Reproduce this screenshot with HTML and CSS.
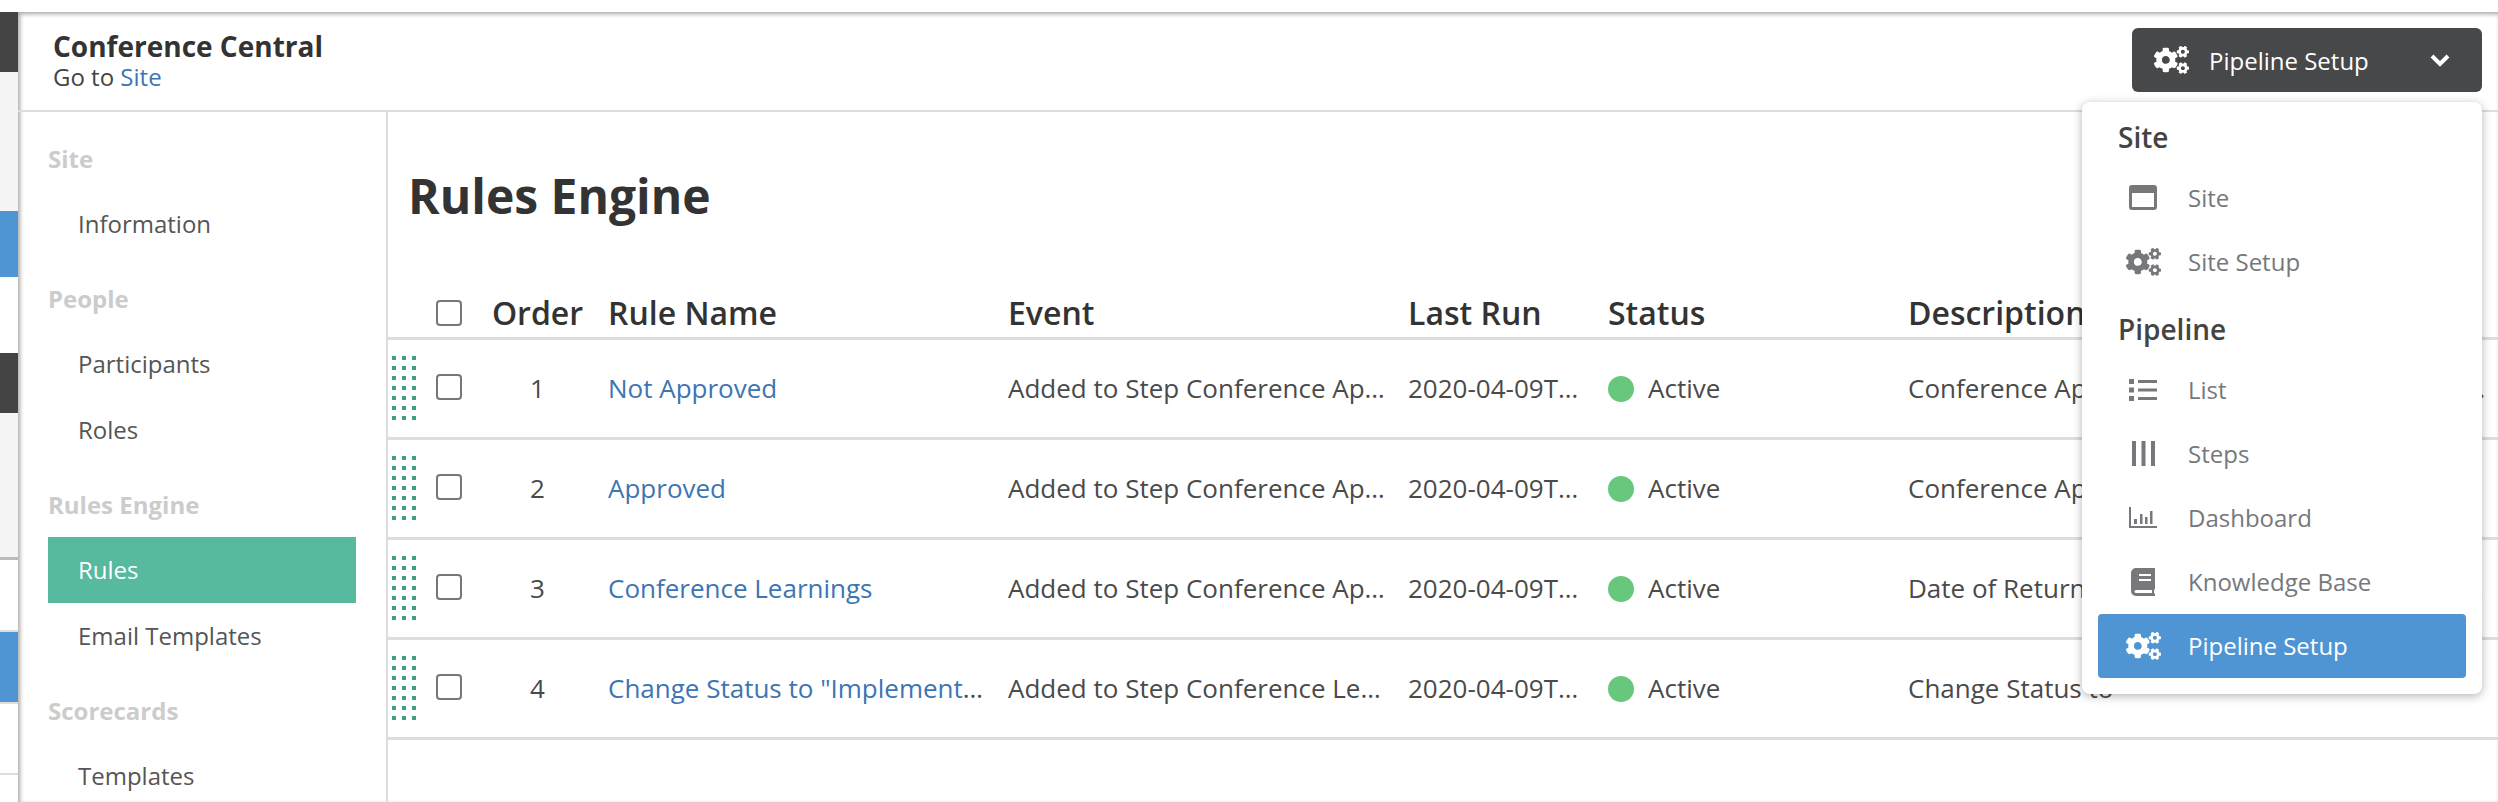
FILE: index.html
```html
<!DOCTYPE html>
<html lang="en">
<head>
<meta charset="utf-8">
<title>Rules Engine</title>
<link rel="stylesheet" href="styles.css">
</head>
<body>
<svg class="defs" aria-hidden="true">
  <symbol id="cogs" viewBox="0 0 640 512"><path d="M512.1 191l-8.2 14.3c-3 5.3-9.4 7.5-15.1 5.4-11.8-4.4-22.6-10.7-32.1-18.6-4.6-3.8-5.8-10.5-2.8-15.7l8.2-14.3c-6.9-8-12.3-17.3-15.9-27.4h-16.5c-6 0-11.2-4.3-12.2-10.3-2-12-2.1-24.6 0-37.1 1-6 6.2-10.4 12.2-10.4h16.5c3.6-10.1 9-19.4 15.9-27.4l-8.2-14.3c-3-5.2-1.9-11.9 2.8-15.7 9.5-7.9 20.4-14.2 32.1-18.6 5.7-2.1 12.1.1 15.1 5.4l8.2 14.3c10.5-1.9 21.2-1.9 31.7 0L552 6.3c3-5.3 9.4-7.5 15.1-5.4 11.8 4.4 22.6 10.7 32.1 18.6 4.6 3.8 5.8 10.5 2.8 15.7l-8.2 14.3c6.9 8 12.3 17.3 15.9 27.4h16.5c6 0 11.2 4.3 12.2 10.3 2 12 2.1 24.6 0 37.1-1 6-6.2 10.4-12.2 10.4h-16.5c-3.6 10.1-9 19.4-15.9 27.4l8.2 14.3c3 5.2 1.9 11.9-2.8 15.7-9.5 7.9-20.4 14.2-32.1 18.6-5.7 2.1-12.1-.1-15.1-5.4l-8.2-14.3c-10.4 1.9-21.2 1.9-31.7 0zm-10.5-58.8c38.5 29.6 82.4-14.3 52.8-52.8-38.5-29.7-82.4 14.3-52.8 52.8zM386.3 286.1l33.7 16.8c10.1 5.8 14.5 18.1 10.5 29.1-8.9 24.2-26.4 46.4-42.6 65.8-7.4 8.9-20.2 11.1-30.3 5.3l-29.1-16.8c-16 13.7-34.6 24.6-54.9 31.7v33.6c0 11.6-8.3 21.6-19.7 23.6-24.6 4.2-50.4 4.4-75.9 0-11.5-2-20-11.9-20-23.6V418c-20.3-7.2-38.9-18-54.9-31.7L74 403c-10 5.8-22.9 3.6-30.3-5.3-16.2-19.4-33.3-41.6-42.2-65.7-4-10.9.4-23.2 10.5-29.1l33.3-16.8c-3.9-20.9-3.9-42.4 0-63.4L12 205.8c-10.1-5.8-14.6-18.1-10.5-29 8.9-24.2 26-46.4 42.2-65.8 7.4-8.9 20.2-11.1 30.3-5.3l29.1 16.8c16-13.7 34.6-24.6 54.9-31.7V57.1c0-11.5 8.2-21.5 19.6-23.5 24.6-4.2 50.5-4.4 76-.1 11.5 2 20 11.9 20 23.6v33.6c20.3 7.2 38.9 18 54.9 31.7l29.1-16.8c10-5.8 22.9-3.6 30.3 5.3 16.2 19.4 33.2 41.6 42.1 65.8 4 10.9.1 23.2-10 29.1l-33.7 16.8c3.9 21 3.9 42.5 0 63.5zm-117.6 21.1c59.2-77-28.7-164.9-105.7-105.7-59.2 77 28.7 164.9 105.7 105.7zm243.4 182.7l-8.2 14.3c-3 5.3-9.4 7.5-15.1 5.4-11.8-4.4-22.6-10.7-32.1-18.6-4.6-3.8-5.8-10.5-2.8-15.7l8.2-14.3c-6.9-8-12.3-17.3-15.9-27.4h-16.5c-6 0-11.2-4.3-12.2-10.3-2-12-2.1-24.6 0-37.1 1-6 6.2-10.4 12.2-10.4h16.5c3.6-10.1 9-19.4 15.9-27.4l-8.2-14.3c-3-5.2-1.9-11.9 2.8-15.7 9.5-7.9 20.4-14.2 32.1-18.6 5.7-2.1 12.1.1 15.1 5.4l8.2 14.3c10.5-1.9 21.2-1.9 31.7 0l8.2-14.3c3-5.3 9.4-7.5 15.1-5.4 11.8 4.4 22.6 10.7 32.1 18.6 4.6 3.8 5.8 10.5 2.8 15.7l-8.2 14.3c6.9 8 12.3 17.3 15.9 27.4h16.5c6 0 11.2 4.3 12.2 10.3 2 12 2.1 24.6 0 37.1-1 6-6.2 10.4-12.2 10.4h-16.5c-3.6 10.1-9 19.4-15.9 27.4l8.2 14.3c3 5.2 1.9 11.9-2.8 15.7-9.5 7.9-20.4 14.2-32.1 18.6-5.7 2.1-12.1-.1-15.1-5.4l-8.2-14.3c-10.4 1.9-21.2 1.9-31.7 0zM501.6 431c38.5 29.6 82.4-14.3 52.8-52.8-38.5-29.6-82.4 14.3-52.8 52.8z"/></symbol>
  <symbol id="grip" viewBox="0 0 24 64">
    <g class="grip-dots">
      <rect x="0" y="0" width="4" height="4"/><rect x="10" y="0" width="4" height="4"/><rect x="20" y="0" width="4" height="4"/>
      <rect x="0" y="10" width="4" height="4"/><rect x="10" y="10" width="4" height="4"/><rect x="20" y="10" width="4" height="4"/>
      <rect x="0" y="20" width="4" height="4"/><rect x="10" y="20" width="4" height="4"/><rect x="20" y="20" width="4" height="4"/>
      <rect x="0" y="30" width="4" height="4"/><rect x="10" y="30" width="4" height="4"/><rect x="20" y="30" width="4" height="4"/>
      <rect x="0" y="40" width="4" height="4"/><rect x="10" y="40" width="4" height="4"/><rect x="20" y="40" width="4" height="4"/>
      <rect x="0" y="50" width="4" height="4"/><rect x="10" y="50" width="4" height="4"/><rect x="20" y="50" width="4" height="4"/>
      <rect x="0" y="60" width="4" height="4"/><rect x="10" y="60" width="4" height="4"/><rect x="20" y="60" width="4" height="4"/>
    </g>
  </symbol>
</svg>
<div class="page">
  <div class="topgap"></div>
  <div class="shell">
    <div class="strip">
      <div class="seg seg-dark seg-h60"></div>
      <div class="seg seg-light seg-h139"></div>
      <div class="seg seg-blue seg-h66"></div>
      <div class="seg seg-h76"></div>
      <div class="seg seg-dark seg-h60"></div>
      <div class="seg seg-light seg-h144"></div>
      <div class="seg seg-line-strong seg-h73"></div>
      <div class="seg seg-blue seg-line seg-h72"></div>
      <div class="seg seg-line seg-h71"></div>
      <div class="seg seg-line seg-rest"></div>
    </div>
    <div class="panel">
      <header class="head">
        <div class="head-title">
          <div class="site-name">Conference Central</div>
          <div class="site-link">Go to <a href="#">Site</a></div>
        </div>
        <button class="switcher" type="button">
          <svg class="ico-cogs"><use href="#cogs"/></svg>
          <span class="switcher-label">Pipeline Setup</span>
          <svg class="chevron" viewBox="0 0 20 14"><path d="M2 3l8 8 8-8" fill="none" stroke="#fff" stroke-width="4"/></svg>
        </button>
      </header>
      <div class="work">
        <nav class="side">
          <h3 class="side-h">Site</h3>
          <a class="side-i" href="#">Information</a>
          <h3 class="side-h">People</h3>
          <a class="side-i" href="#">Participants</a>
          <a class="side-i" href="#">Roles</a>
          <h3 class="side-h">Rules Engine</h3>
          <a class="side-i is-active" href="#">Rules</a>
          <a class="side-i" href="#">Email Templates</a>
          <h3 class="side-h">Scorecards</h3>
          <a class="side-i" href="#">Templates</a>
        </nav>
        <main class="content">
          <h1 class="title">Rules Engine</h1>
          <table class="rules">
            <colgroup>
              <col class="c-grip"><col class="c-check"><col class="c-order"><col class="c-name"><col class="c-event"><col class="c-run"><col class="c-status"><col class="c-desc">
            </colgroup>
            <thead>
              <tr>
                <th></th>
                <th class="center"><span class="check"></span></th>
                <th class="center">Order</th>
                <th>Rule Name</th>
                <th>Event</th>
                <th>Last Run</th>
                <th>Status</th>
                <th>Description</th>
              </tr>
            </thead>
            <tbody>
              <tr>
                <td><svg class="grip"><use href="#grip"/></svg></td>
                <td class="center cell-check"><span class="check"></span></td>
                <td class="center">1</td>
                <td><a href="#">Not Approved</a></td>
                <td>Added to Step Conference Application Review</td>
                <td>2020-04-09T14:32:10.000Z</td>
                <td><span class="dot"></span>Active</td>
                <td>Conference Application was not approved so the status of the item is changed and an email is sent to the applicant right away</td>
              </tr>
              <tr>
                <td><svg class="grip"><use href="#grip"/></svg></td>
                <td class="center cell-check"><span class="check"></span></td>
                <td class="center">2</td>
                <td><a href="#">Approved</a></td>
                <td>Added to Step Conference Application Review</td>
                <td>2020-04-09T14:32:10.000Z</td>
                <td><span class="dot"></span>Active</td>
                <td>Conference Application was approved</td>
              </tr>
              <tr>
                <td><svg class="grip"><use href="#grip"/></svg></td>
                <td class="center cell-check"><span class="check"></span></td>
                <td class="center">3</td>
                <td><a href="#">Conference Learnings</a></td>
                <td>Added to Step Conference Application Review</td>
                <td>2020-04-09T14:32:10.000Z</td>
                <td><span class="dot"></span>Active</td>
                <td>Date of Return from the conference is used to send a reminder asking for learnings to be shared with the whole team</td>
              </tr>
              <tr>
                <td><svg class="grip"><use href="#grip"/></svg></td>
                <td class="center cell-check"><span class="check"></span></td>
                <td class="center">4</td>
                <td><a href="#">Change Status to "Implemented" after review</a></td>
                <td>Added to Step Conference Learnings Review</td>
                <td>2020-04-09T14:32:10.000Z</td>
                <td><span class="dot"></span>Active</td>
                <td>Change Status to</td>
              </tr>
            </tbody>
          </table>
        </main>
      </div>
    </div>
  </div>
  <div class="menu">
    <div class="menu-h">Site</div>
    <a class="menu-i" href="#">
      <span class="menu-ico"><svg viewBox="0 0 28 25" class="i-site"><path fill-rule="evenodd" d="M3 0h22a3 3 0 0 1 3 3v19a3 3 0 0 1-3 3H3a3 3 0 0 1-3-3V3a3 3 0 0 1 3-3zm0 8v14h22V8z"/></svg></span>Site
    </a>
    <a class="menu-i" href="#"><span class="menu-ico"><svg class="ico-cogs"><use href="#cogs"/></svg></span>Site Setup</a>
    <div class="menu-h">Pipeline</div>
    <a class="menu-i" href="#">
      <span class="menu-ico"><svg viewBox="0 0 28 22" class="i-list"><path d="M0 0h5v5H0zM9 1h19v3H9zM0 8.500h5v5H0zM9 9.500h19v3H9zM0 17h5v5H0zM9 18h19v3H9z"/></svg></span>List
    </a>
    <a class="menu-i" href="#">
      <span class="menu-ico"><svg viewBox="0 0 23 25" class="i-steps"><path d="M0 0h4v25H0zM9.500 0h4v25h-4zM19 0h4v25h-4z"/></svg></span>Steps
    </a>
    <a class="menu-i" href="#">
      <span class="menu-ico"><svg viewBox="0 0 28 21" class="i-dash"><path d="M0 0h2v19h26v2H0zM5 12h3v5H5zM11 7h2.500v10H11zM16 10h2.500v7H16zM21 4h2.500v13H21z"/></svg></span>Dashboard
    </a>
    <a class="menu-i" href="#">
      <span class="menu-ico"><svg viewBox="0 0 24 28" class="i-book"><path fill-rule="evenodd" d="M5 0h19v21l-1 1v3l1 1v2H5a5 5 0 0 1-5-5V5a5 5 0 0 1 5-5zm3 6v2h12V6zm0 5v2h12v-2zM5 22a1.500 1.500 0 0 0 0 3h16v-3z"/></svg></span>Knowledge Base
    </a>
    <a class="menu-i is-current" href="#"><span class="menu-ico"><svg class="ico-cogs"><use href="#cogs"/></svg></span>Pipeline Setup</a>
  </div>
</div>
</body>
</html>
```
FILE: styles.css
```css
* { box-sizing: border-box; }
html, body { margin: 0; padding: 0; background: #fff; }
body { font-family: "Open Sans", "Noto Sans", sans-serif; color: #4a4a4a; font-size: 24px; }
a { color: #3d75b3; text-decoration: none; }
.defs { width: 0; height: 0; display: block; }

.page { position: relative; width: 2498px; height: 802px; overflow: hidden; display: flex; flex-direction: column; }
.topgap { height: 12px; flex: none; }
.shell { flex: 1; display: flex; min-height: 0; }

.strip { width: 18px; flex: none; display: flex; flex-direction: column; background: #fff; }
.seg { flex: none; }
.seg-dark { background: #444; }
.seg-light { background: #f4f4f4; }
.seg-blue { background: #4f95d4; }
.seg-line { border-top: 2px solid #ddd; }
.seg-line-strong { border-top: 3px solid #bbb; }
.seg-h60 { height: 60px; }
.seg-h139 { height: 139px; }
.seg-h66 { height: 66px; }
.seg-h76 { height: 76px; }
.seg-h144 { height: 144px; }
.seg-h73 { height: 73px; }
.seg-h72 { height: 72px; }
.seg-h71 { height: 71px; }
.seg-rest { flex: 1; }

.panel { flex: 1; min-width: 0; display: flex; flex-direction: column; background: #fff; box-shadow: inset 2px 2px 4px rgba(0,0,0,.35); }

.head { height: 100px; flex: none; display: flex; justify-content: space-between; align-items: flex-start; padding: 16px 16px 0 35px; border-bottom: 2px solid #ddd; }
.site-name { font-size: 28px; font-weight: 700; line-height: 36px; color: #333; }
.site-link { font-size: 24px; line-height: 26px; color: #444; }

.switcher { width: 350px; height: 64px; display: flex; align-items: center; border: 0; border-radius: 6px; background: #47484a; color: #fff; font: inherit; padding: 0 32px 0 22px; }
.switcher .ico-cogs { fill: #fff; }
.switcher-label { margin-left: 20px; flex: 1; text-align: left; }
.chevron { width: 20px; height: 14px; }
.ico-cogs { width: 35px; height: 28px; display: block; }

.work { flex: 1; display: flex; min-height: 0; }
.side { width: 370px; flex: none; padding: 13px 30px 0; border-right: 2px solid #ddd; }
.side-h { margin: 8px 0 0; height: 66px; line-height: 67px; font-size: 24px; font-weight: 700; color: #ccc; }
.side-h:first-child { margin-top: 0; }
.side-i { display: block; height: 66px; line-height: 66px; padding-left: 30px; color: #555; }
.side-i.is-active { background: #57b99d; color: #fff; }

.content { flex: 1; min-width: 0; }
.title { margin: 0 0 0 20px; padding-top: 46px; height: 178px; font-size: 48px; line-height: 76px; font-weight: 700; color: #333; }

.rules { width: 100%; table-layout: fixed; border-collapse: collapse; font-size: 26px; }
.c-grip { width: 36px; }
.c-check { width: 50px; }
.c-order { width: 127px; }
.c-name { width: 400px; }
.c-event { width: 400px; }
.c-run { width: 200px; }
.c-status { width: 300px; }
.rules th { height: 48px; padding: 0 16px 1px 7px; line-height: 36px; text-align: left; font-size: 32px; font-weight: 600; color: #333; border-bottom: 3px solid #ddd; white-space: nowrap; }
.rules td { height: 100px; padding: 0 16px 1px 7px; line-height: 36px; border-bottom: 3px solid #ddd; white-space: nowrap; overflow: hidden; text-overflow: ellipsis; }
.rules td:last-child { padding-right: 8px; }
.rules td:first-child { padding: 0 0 0 4px; }
.rules .center { padding-left: 0; padding-right: 0; text-align: center; }
.rules .cell-check { padding-bottom: 3px; }
.check { display: block; width: 26px; height: 26px; margin: 0 auto; border: 2px solid #777; border-radius: 4px; background: #fff; }
.grip { display: block; width: 24px; height: 64px; fill: #3f9f82; }
.dot { display: inline-block; width: 26px; height: 26px; border-radius: 50%; background: #66c77d; margin-right: 14px; vertical-align: middle; position: relative; top: -2px; }

.menu { position: absolute; left: 2082px; top: 102px; width: 400px; height: 592px; padding: 0 16px 16px; background: #fff; border-radius: 8px; box-shadow: 0 2px 10px rgba(0,0,0,.3); z-index: 5; }
.menu-h { height: 64px; padding: 6px 0 0 20px; line-height: 58px; font-size: 28px; font-weight: 600; color: #444; }
.menu-i { display: flex; align-items: center; height: 64px; color: #76787b; font-size: 24px; padding-bottom: 1px; }
.menu-ico { width: 90px; flex: none; display: flex; justify-content: center; }
.menu-ico svg { display: block; fill: #76787b; }
.menu-ico .ico-cogs { fill: #76787b; }
.i-site { width: 28px; height: 25px; }
.i-list { width: 28px; height: 22px; }
.i-steps { width: 23px; height: 25px; }
.i-dash { width: 28px; height: 21px; }
.i-book { width: 24px; height: 28px; }
.menu-i.is-current { background: #4f95d4; color: #fff; border-radius: 4px; }
.menu-i.is-current .ico-cogs { fill: #fff; }
```
